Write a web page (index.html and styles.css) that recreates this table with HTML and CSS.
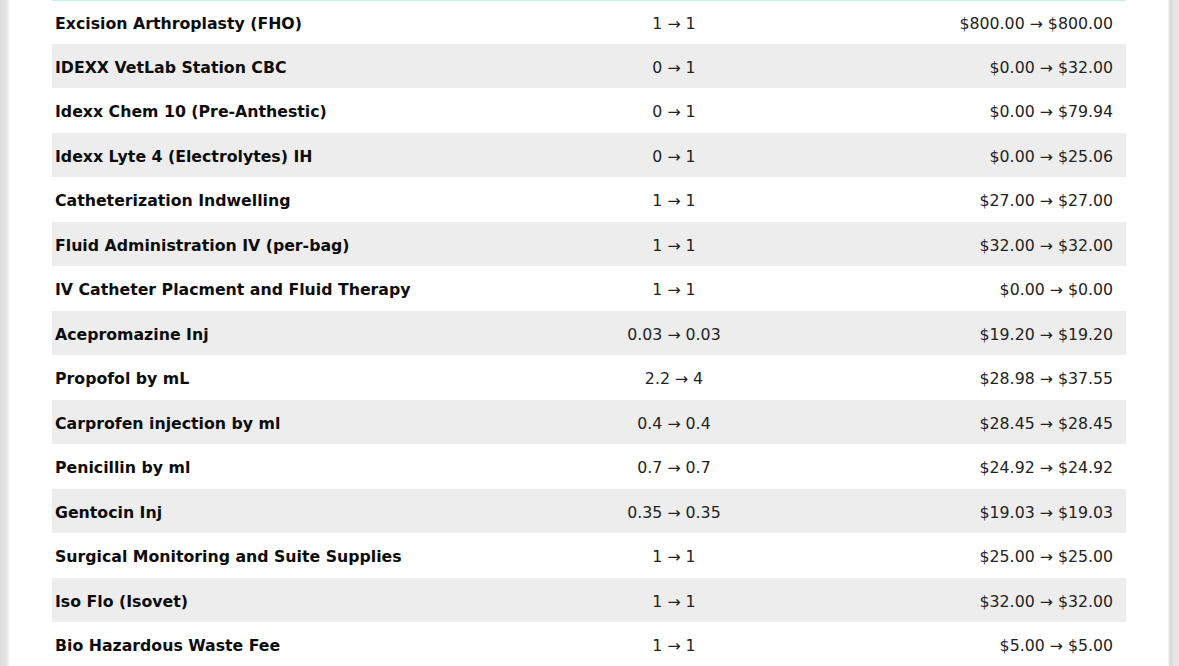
FILE: index.html
```html
<!DOCTYPE html>
<html>
<head>
<meta charset="utf-8">
<link rel="stylesheet" href="styles.css">
</head>
<body>
<div class="page">
  <div class="card">
    <table class="items">
      <colgroup><col class="c-name"><col class="c-qty"><col class="c-price"></colgroup>
      <tbody>
        <tr><td class="name">Excision Arthroplasty (FHO)</td><td class="qty">1 → 1</td><td class="price">$800.00 → $800.00</td></tr>
        <tr><td class="name">IDEXX VetLab Station CBC</td><td class="qty">0 → 1</td><td class="price">$0.00 → $32.00</td></tr>
        <tr><td class="name">Idexx Chem 10 (Pre-Anthestic)</td><td class="qty">0 → 1</td><td class="price">$0.00 → $79.94</td></tr>
        <tr><td class="name">Idexx Lyte 4 (Electrolytes) IH</td><td class="qty">0 → 1</td><td class="price">$0.00 → $25.06</td></tr>
        <tr><td class="name">Catheterization Indwelling</td><td class="qty">1 → 1</td><td class="price">$27.00 → $27.00</td></tr>
        <tr><td class="name">Fluid Administration IV (per-bag)</td><td class="qty">1 → 1</td><td class="price">$32.00 → $32.00</td></tr>
        <tr><td class="name">IV Catheter Placment and Fluid Therapy</td><td class="qty">1 → 1</td><td class="price">$0.00 → $0.00</td></tr>
        <tr><td class="name">Acepromazine Inj</td><td class="qty">0.03 → 0.03</td><td class="price">$19.20 → $19.20</td></tr>
        <tr><td class="name">Propofol by mL</td><td class="qty">2.2 → 4</td><td class="price">$28.98 → $37.55</td></tr>
        <tr><td class="name">Carprofen injection by ml</td><td class="qty">0.4 → 0.4</td><td class="price">$28.45 → $28.45</td></tr>
        <tr><td class="name">Penicillin by ml</td><td class="qty">0.7 → 0.7</td><td class="price">$24.92 → $24.92</td></tr>
        <tr><td class="name">Gentocin Inj</td><td class="qty">0.35 → 0.35</td><td class="price">$19.03 → $19.03</td></tr>
        <tr><td class="name">Surgical Monitoring and Suite Supplies</td><td class="qty">1 → 1</td><td class="price">$25.00 → $25.00</td></tr>
        <tr><td class="name">Iso Flo (Isovet)</td><td class="qty">1 → 1</td><td class="price">$32.00 → $32.00</td></tr>
        <tr><td class="name">Bio Hazardous Waste Fee</td><td class="qty">1 → 1</td><td class="price">$5.00 → $5.00</td></tr>
      </tbody>
    </table>
  </div>
</div>
</body>
</html>
```
FILE: styles.css
```css
html, body {
  margin: 0;
  padding: 0;
  background: #e2e2e2;
  overflow: hidden;
}
.page {
  height: 666px;
  padding: 0 10px 0 8px;
  background: linear-gradient(to right, #dcdcdc 0, #e4e4e4 6px, #ececec 8px, #ffffff 10px, #ffffff 1168px, #d6d6d6 1170px, #e0e0e0 1172px, #e8e8e8 1179px);
}
.card {
  padding: 0 42px 0 44px;
  height: 666px;
}
.items {
  width: 1074px;
  border-collapse: collapse;
  border-top: 1px solid #c4f2f0;
  font-family: "DejaVu Sans", sans-serif;
  font-size: 15.75px;
  color: #111;
  table-layout: fixed;
}
.c-name { width: 470px; }
.c-qty { width: 304px; }
.c-price { width: 300px; }
.items tr { height: 44.5px; }
.items tr:first-child { height: 43px; }
.items tr:nth-child(even) td { background: #ededed; }
.items td { padding: 3px 0 0 0; vertical-align: middle; }
.name { font-weight: bold; padding-left: 3px !important; color: #0c0c0c; }
.qty { text-align: center; color: #222; }
.price { text-align: right; padding-right: 13px !important; color: #222; }
```
